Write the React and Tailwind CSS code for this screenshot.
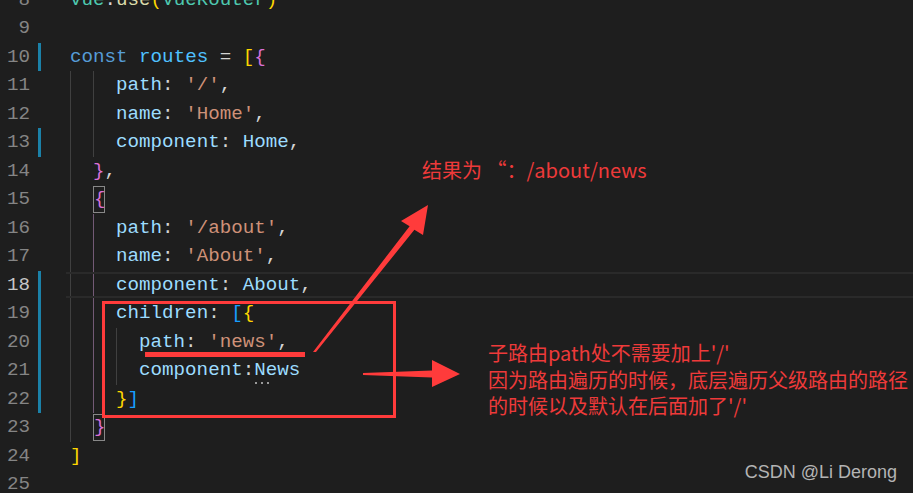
import React from 'react';

// token colours (VS Code Dark+ with bracket pair colouring)
const kw = 'text-[#569cd6]';
const cv = 'text-[#4fc1ff]';
const pr = 'text-[#9cdcfe]';
const st = 'text-[#ce9178]';
const pn = 'text-[#d4d4d4]';
const yb = 'text-[#ffd700]';
const pb = 'text-[#da70d6]';
const bb = 'text-[#179fff]';
const ty = 'text-[#4ec9b0]';
const fn = 'text-[#dcdcaa]';

const G = 'gray';
const P = 'purple';

const lines = [
  { n: 8, tokens: [['Vue', ty], ['.', pn], ['use', fn], ['(', yb], ['VueRouter', ty], [')', yb]] },
  { n: 9 },
  { n: 10, bar: true, tokens: [['const', kw], [' ', pn], ['routes', cv], [' = ', pn], ['[', yb], ['{', pb]] },
  { n: 11, guides: [G, G], tokens: [['path', pr], [': ', pn], ["'/'", st], [',', pn]] },
  { n: 12, guides: [G, G], tokens: [['name', pr], [': ', pn], ["'Home'", st], [',', pn]] },
  { n: 13, bar: true, guides: [G, G], tokens: [['component', pr], [': ', pn], ['Home', pr], [',', pn]] },
  { n: 14, guides: [G], tokens: [['}', pb], [',', pn]] },
  { n: 15, guides: [G], box: ['{', pb] },
  { n: 16, guides: [G, P], tokens: [['path', pr], [': ', pn], ["'/about'", st], [',', pn]] },
  { n: 17, guides: [G, P], tokens: [['name', pr], [': ', pn], ["'About'", st], [',', pn]] },
  { n: 18, bar: true, active: true, guides: [G, P], tokens: [['component', pr], [': ', pn], ['About', pr], [',', pn]] },
  { n: 19, bar: true, guides: [G, P], tokens: [['children', pr], [': ', pn], ['[', bb], ['{', yb]] },
  { n: 20, bar: true, guides: [G, P, G], tokens: [['path', pr], [': ', pn], ["'news'", st], [',', pn]] },
  { n: 21, bar: true, guides: [G, P, G], tokens: [['component', pr], [':', pn]], hint: 'News' },
  { n: 22, bar: true, guides: [G, P], tokens: [['}', yb], [']', bb]] },
  { n: 23, guides: [G], box: ['}', pb] },
  { n: 24, tokens: [[']', yb]] },
  { n: 25 },
];

const CodeLine = ({ n, bar, active, guides = [], tokens = [], box, hint }) => (
  <div className="relative flex h-[28.5px] shrink-0">
    {/* current line border */}
    {active && (
      <div className="absolute left-[66px] right-0 top-[1px] bottom-[1px] border-y-2 border-[#2a2a2a] pointer-events-none" />
    )}
    <div className={`w-[30px] text-right leading-[28.5px] ${active ? 'text-[#c6c6c6]' : 'text-[#858585]'}`}>{n}</div>
    <div className={`ml-[8px] w-[3px] ${bar ? 'bg-[#1b81a8]' : ''}`} />
    <div className="ml-[29px] flex flex-1">
      {guides.map((g, i) => (
        <div
          key={i}
          className={`w-[2ch] shrink-0 border-l ${g === P ? 'border-[#735a76]' : 'border-[#404040]'}`}
        />
      ))}
      {box && (
        <span className={`my-[1px] w-[1ch] border border-[#888888] leading-[25px] ${box[1]}`}>{box[0]}</span>
      )}
      {tokens.map(([t, c], i) => (
        <span key={i} className={`whitespace-pre leading-[28.5px] ${c}`}>{t}</span>
      ))}
      {hint && (
        <span className={`relative whitespace-pre leading-[28.5px] ${pr}`}>
          {hint}
          {/* hint dots under the identifier */}
          <span className="absolute left-[1px] bottom-[1px] flex gap-[4px]">
            <span className="w-[2px] h-[2px] bg-[#9a9a9a]" />
            <span className="w-[2px] h-[2px] bg-[#9a9a9a]" />
            <span className="w-[2px] h-[2px] bg-[#9a9a9a]" />
          </span>
        </span>
      )}
    </div>
  </div>
);

const App = () => {
  return (
    <div className="relative w-[913px] h-[493px] overflow-hidden bg-[#1e1e1e]">
      {/* Editor */}
      <div className="flex flex-col -mt-[14.2px] font-['Liberation_Mono',monospace] text-[19.2px]">
        {lines.map((l) => (
          <CodeLine key={l.n} {...l} />
        ))}
      </div>

      {/* Red annotations drawn over the screenshot */}
      <svg className="absolute inset-0 pointer-events-none" width="913" height="493" viewBox="0 0 913 493">
        <rect x="103.5" y="302.5" width="291" height="114" fill="none" stroke="#ff3b3b" strokeWidth="3" />
        <rect x="145" y="352" width="160" height="5" fill="#ff3b3b" />
        <polygon
          points="313,352 316,352 414.4,229.8 423,235 428,205 401,221 409.6,226.2"
          fill="#ff3b3b"
        />
        <polygon points="363,373 432,370.5 432,360 460,374 432,387 432,377.5 363,375" fill="#ff3b3b" />
      </svg>

      <div className="absolute left-[422px] top-[157px] font-['Noto_Sans_CJK_SC',sans-serif] text-[20px] leading-[26px] text-[#ee3a3a]">
        结果为 “：/about/news
      </div>

      <div className="absolute left-[488px] top-[340px] flex flex-col font-['Noto_Sans_CJK_SC',sans-serif] text-[20px] leading-[26.5px] text-[#ee3a3a]">
        <span>子路由path处不需要加上'/'</span>
        <span>因为路由遍历的时候，底层遍历父级路由的路径</span>
        <span>的时候以及默认在后面加了'/'</span>
      </div>

      {/* watermark */}
      <div className="absolute right-[16px] bottom-[10px] font-['Liberation_Sans',sans-serif] text-[18px] leading-[22px] text-[#b4b4b4]">
        CSDN @Li Derong
      </div>
    </div>
  );
};

export default App;
